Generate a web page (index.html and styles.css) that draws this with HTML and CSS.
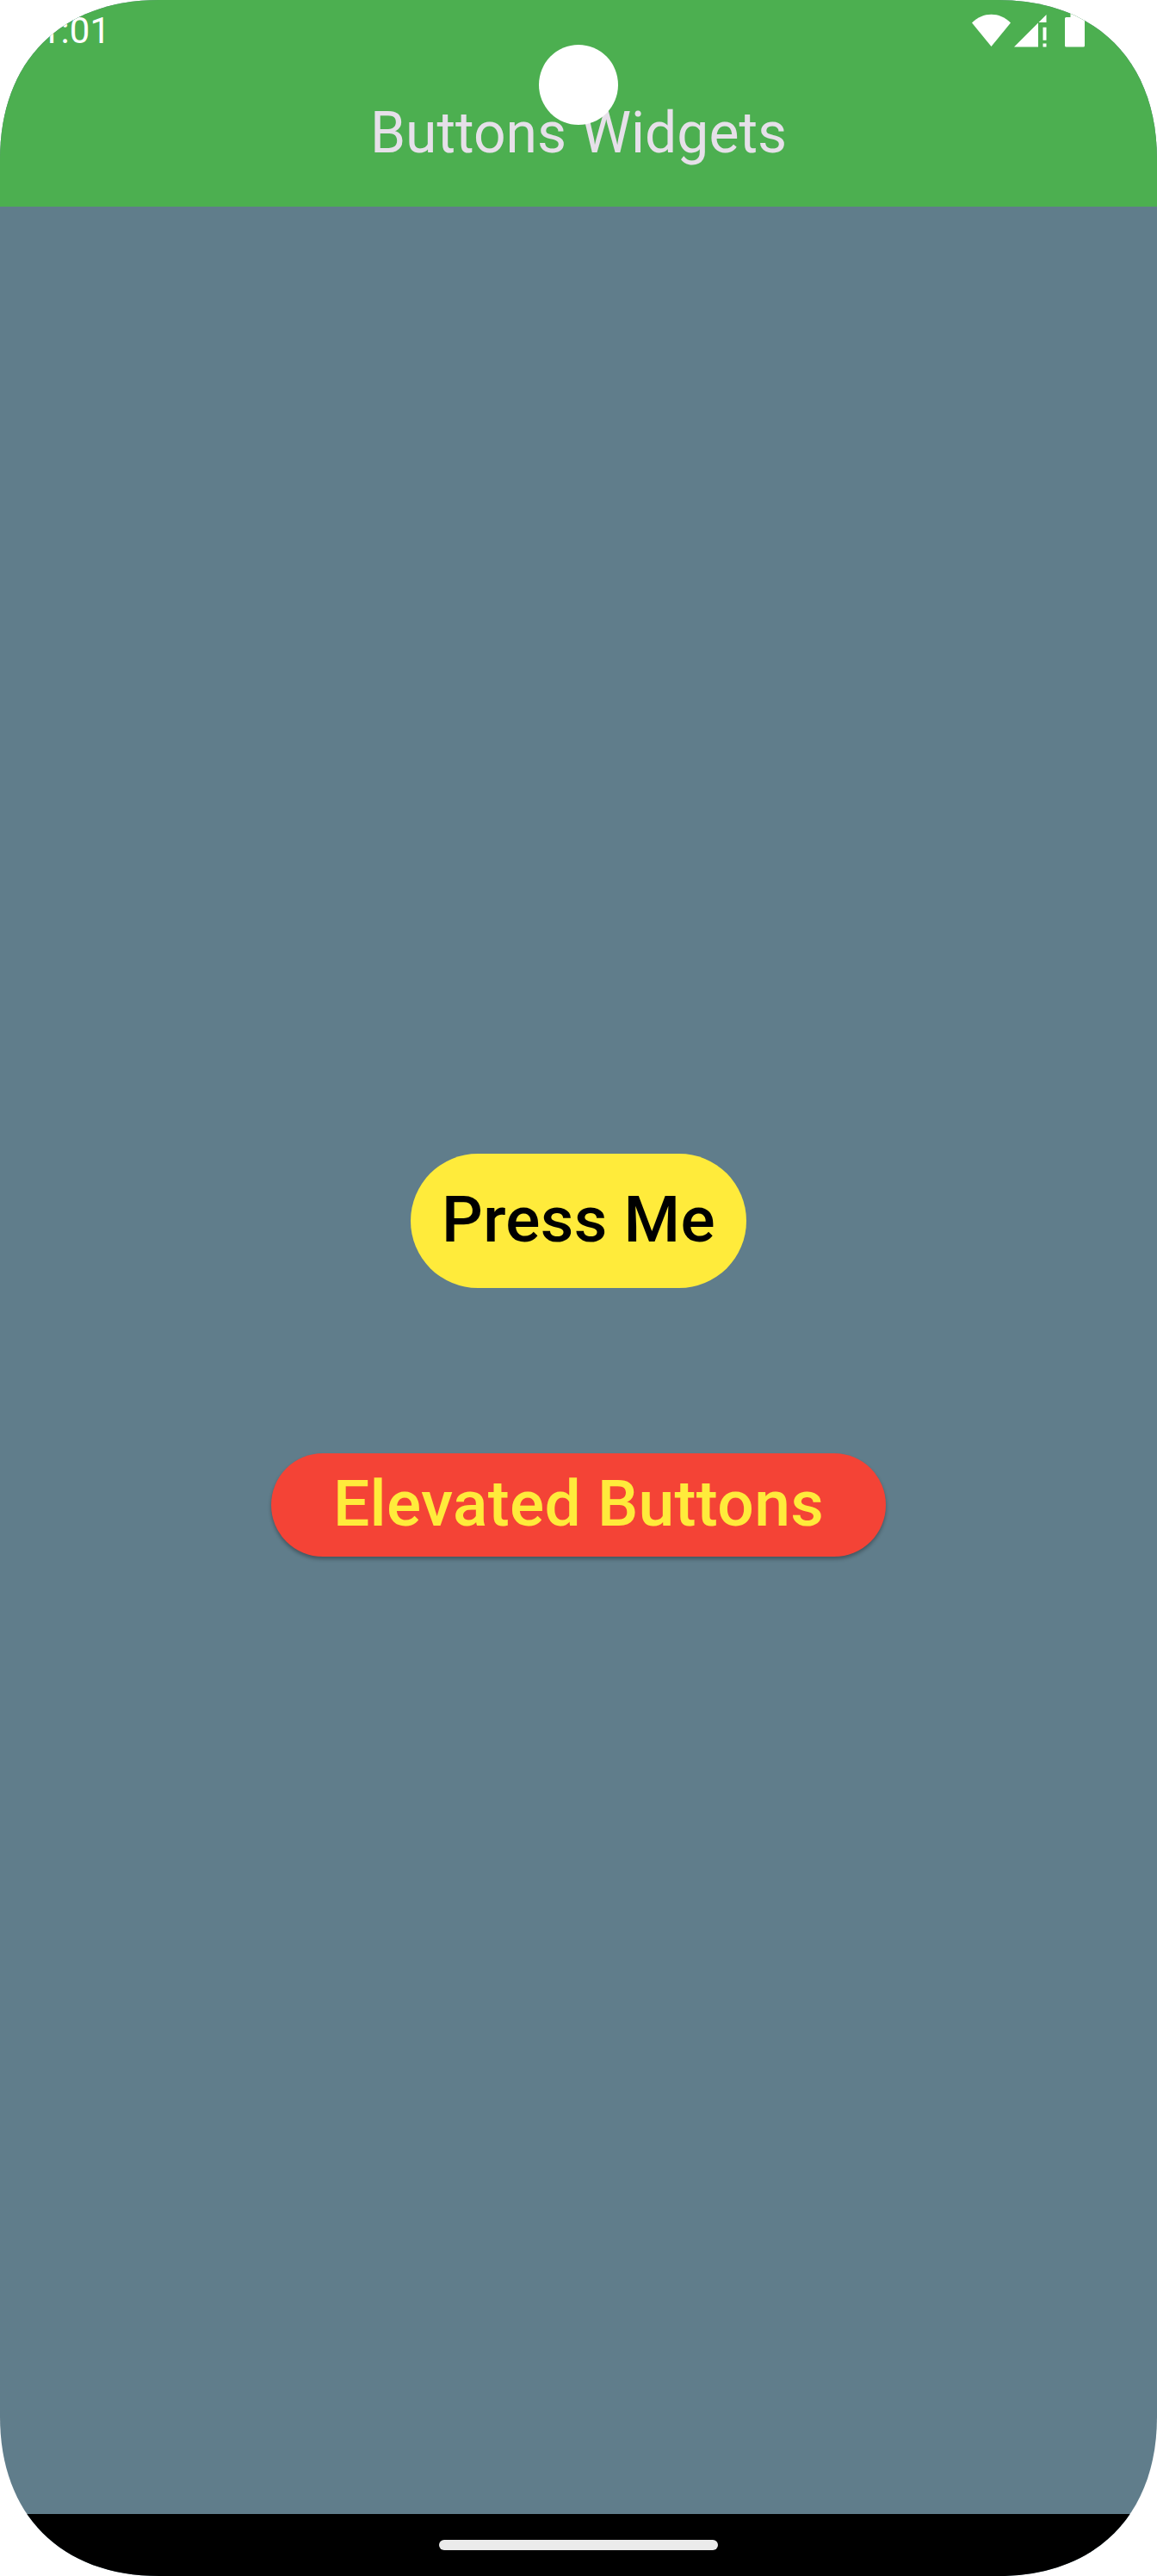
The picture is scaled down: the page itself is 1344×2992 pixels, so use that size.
FILE: index.html
```html
<!DOCTYPE html>
<html lang="en">
<head>
<meta charset="utf-8">
<title>Buttons Widgets</title>
<link rel="stylesheet" href="styles.css">
</head>
<body>
<div class="screen">
  <header class="app-bar">
    <div class="status-bar">
      <span class="clock">1:01</span>
      <svg class="status-icons" width="132" height="42" viewBox="0 0 132 42" fill="#fff" aria-hidden="true">
        <path d="M1 12.500C14 -0.500 33 -0.500 46 12.500L23.500 40Z"/>
        <path d="M50 40.500L78 12.500V40.500ZM78.500 12L87.500 3V12ZM83.500 17.700H87.500V32.700H83.500ZM83.500 36.500H87.500V40.500H83.500Z"/>
        <path d="M115.500 1H125V6H130.500Q132 6 132 7.500V39Q132 40.500 130.500 40.500H110.500Q109 40.500 109 39V7.500Q109 6 110.500 6H115.500Z"/>
      </svg>
    </div>
    <h1 class="title">Buttons Widgets</h1>
    <div class="camera"></div>
  </header>
  <main class="content">
    <button class="btn btn-text">Press Me</button>
    <button class="btn btn-elevated">Elevated Buttons</button>
  </main>
  <footer class="nav-bar"><div class="handle"></div></footer>
</div>
</body>
</html>
```

FILE: styles.css
```css
* {
  box-sizing: border-box;
}

body {
  margin: 0;
  background: #fff;
  font-family: Roboto, sans-serif;
}

.screen {
  display: flex;
  flex-direction: column;
  width: 1344px;
  height: 2992px;
  background: #607d8b;
  clip-path: path("M0 185C0 71 71 0 185 0H1159C1273 0 1344 71 1344 185V2807C1344 2921 1273 2992 1159 2992H185C71 2992 0 2921 0 2807Z");
}

.app-bar {
  position: relative;
  height: 240px;
  background: #4caf50;
}

.status-bar {
  display: flex;
  justify-content: space-between;
  height: 72px;
  padding: 14px 84px 0 47px;
}

.clock {
  color: #fff;
  font-size: 42px;
  line-height: 44px;
}

.title {
  margin: 0;
  color: #e6e0e9;
  font-size: 66px;
  font-weight: 400;
  line-height: 165px;
  text-align: center;
}

/* Front camera cutout, over the title */
.camera {
  position: absolute;
  top: 52px;
  left: 626px;
  width: 92px;
  height: 93px;
  border-radius: 50%;
  background: #fff;
}

.content {
  display: flex;
  flex: 1;
  flex-direction: column;
  align-items: center;
  gap: 192px;
  padding-top: 1100px;
}

.btn {
  padding: 0 0 4px;
  border: 0;
  border-radius: 78px;
  font-family: inherit;
  font-size: 75px;
  font-weight: 500;
  letter-spacing: 0.3px;
  white-space: nowrap;
}

.btn-text {
  width: 390px;
  height: 156px;
  background: #ffeb3b;
  color: #000;
}

.btn-elevated {
  width: 714px;
  height: 120px;
  background: #f44336;
  box-shadow: 0 3px 4px rgba(0, 0, 0, 0.3);
  color: #ffeb3b;
}

.nav-bar {
  display: flex;
  justify-content: center;
  height: 72px;
  padding-top: 30px;
  background: #000;
}

.handle {
  width: 324px;
  height: 12px;
  border-radius: 6px;
  background: #ebebeb;
}
```
